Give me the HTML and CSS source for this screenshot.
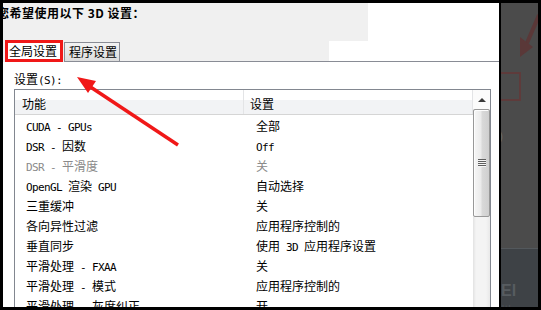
FILE: index.html
```html
<!DOCTYPE html>
<html lang="zh-CN">
<head>
<meta charset="utf-8">
<title>3D 设置</title>
<link rel="stylesheet" href="styles.css">
</head>
<body>
<div class="screen">
  <div class="dialog">
    <div class="title-bar"><h1 class="title">您希望使用以下 3D 设置：</h1></div>
    <div class="tabs">
      <div class="tab tab-active">全局设置</div>
      <div class="tab">程序设置</div>
      <div class="tab-fill"></div>
    </div>
    <div class="panel">
      <div class="label">设置<span class="lat">(S):</span></div>
      <div class="list">
        <div class="list-main">
          <div class="list-head">
            <div class="h1">功能</div>
            <div class="h2">设置</div>
          </div>
          <div class="list-body">
            <div class="row"><div class="c1"><span class="lat">CUDA - GPUs</span></div><div class="c2">全部</div></div>
            <div class="row"><div class="c1"><span class="lat">DSR - </span>因数</div><div class="c2"><span class="lat">Off</span></div></div>
            <div class="row row-off"><div class="c1"><span class="lat">DSR - </span>平滑度</div><div class="c2">关</div></div>
            <div class="row"><div class="c1"><span class="lat">OpenGL </span>渲染<span class="lat"> GPU</span></div><div class="c2">自动选择</div></div>
            <div class="row"><div class="c1">三重缓冲</div><div class="c2">关</div></div>
            <div class="row"><div class="c1">各向异性过滤</div><div class="c2">应用程序控制的</div></div>
            <div class="row"><div class="c1">垂直同步</div><div class="c2">使用<span class="lat"> 3D </span>应用程序设置</div></div>
            <div class="row"><div class="c1">平滑处理<span class="lat"> - FXAA</span></div><div class="c2">关</div></div>
            <div class="row"><div class="c1">平滑处理<span class="lat"> - </span>模式</div><div class="c2">应用程序控制的</div></div>
            <div class="row"><div class="c1">平滑处理<span class="lat"> - </span>灰度纠正</div><div class="c2">开</div></div>
          </div>
        </div>
        <div class="scrollbar">
          <div class="sb-up"><span class="sb-arrow"></span></div>
          <div class="sb-thumb"><span class="sb-grip"></span></div>
          <div class="sb-track"></div>
        </div>
      </div>
    </div>
  </div>
  <div class="side">
    <svg class="side-art" width="37" height="304" viewBox="0 0 37 304">
      <rect x="0" y="245" width="37" height="59" fill="#3e4246"/>
      <rect x="0" y="245" width="37" height="1" fill="#53585c"/>
      <line x1="38" y1="12" x2="26" y2="40" stroke="#5a3838" stroke-width="4"/>
      <polygon points="19,34 19,54 32,44" fill="#5a3838"/>
      <polyline points="0,70 19,70 19,97 0,97" fill="none" stroke="#5e3b3b" stroke-width="2"/>
      <text x="-2" y="137" fill="#6a6a6a" font-size="12" font-family="Liberation Sans, sans-serif">)</text>
      <text x="0" y="293" fill="#575c60" font-size="16" font-weight="bold" font-family="Liberation Sans, sans-serif">El</text>
      <text x="0" y="310" fill="#50555a" font-size="10" font-family="Noto Sans CJK SC, sans-serif">川</text>
    </svg>
  </div>
</div>
<svg class="annot" width="541" height="310" viewBox="0 0 541 310">
  <line x1="89" y1="86" x2="178" y2="145" stroke="#f01818" stroke-width="3.5"/>
  <polygon points="77,77 88,93 96,81" fill="#f01818"/>
</svg>
</body>
</html>
```

FILE: styles.css
```css
* { box-sizing: border-box; }

html, body { margin: 0; padding: 0; }

body {
  position: relative;
  width: 541px;
  height: 310px;
  overflow: hidden;
  background: #000;
  font-family: "Noto Sans CJK SC", "Noto Sans", sans-serif;
  font-size: 12px;
  color: #000;
}

.screen {
  display: flex;
  height: 310px;
  padding: 3px;
}

.dialog {
  flex: none;
  width: 496px;
  height: 304px;
  background: #fff;
  overflow: hidden;
}

.side {
  flex: none;
  width: 37px;
  height: 304px;
  margin-left: 2px;
  background: #4b4b4b;
  overflow: hidden;
}

.side-art { display: block; }

.lat {
  font-family: "DejaVu Sans Mono", "Liberation Mono", monospace;
  font-size: 11px;
  letter-spacing: -0.62px;
  line-height: 1;
}

/* title */
.title-bar {
  width: 365px;
  height: 38px;
  padding-top: 2px;
  background: #f0f0f0;
}

.title {
  margin: 0 0 0 -6px;
  font-size: 12px;
  line-height: 16px;
  font-weight: bold;
  letter-spacing: 0.5px;
  white-space: nowrap;
}

/* tabs */
.tabs {
  display: flex;
  align-items: flex-end;
  height: 21px;
  padding-left: 2px;
  background: linear-gradient(to right, #f0f0f0 326px, #fff 326px);
}

.tab {
  flex: none;
  width: 56px;
  height: 20px;
  margin-left: 1px;
  padding-left: 4px;
  border: 1px solid #898c95;
  background: linear-gradient(#f3f3f3, #dcdcdc);
  line-height: 18px;
  white-space: nowrap;
}

.tab-active {
  width: 58px;
  height: 22px;
  margin-left: 0;
  padding-left: 1px;
  border: 3px solid #f01818;
  background: #fff;
  line-height: 16px;
}

.tab-fill {
  flex: 1;
  height: 1px;
  background: #898c95;
}

/* panel */
.panel {
  padding: 10px 0 0 11px;
}

.label {
  height: 14px;
  line-height: 14px;
  white-space: nowrap;
}

.list {
  display: flex;
  width: 477px;
  height: 240px;
  margin-top: 3px;
  border: 1px solid #828790;
}

.list-main {
  flex: none;
  width: 458px;
}

.list-head {
  display: flex;
  height: 25px;
  border-bottom: 1px solid #d5d5d5;
  background: linear-gradient(#ffffff 0, #ffffff 40%, #f2f3f5 42%, #f2f3f5 100%);
  line-height: 19px;
}

.h1 {
  width: 229px;
  padding: 4px 0 0 7px;
  border-right: 1px solid #e3e4e6;
}

.h2 {
  flex: 1;
  padding: 4px 0 0 6px;
  border-right: 1px solid #e3e4e6;
}

.list-body {
  padding-top: 1px;
}

.row {
  display: flex;
  height: 20px;
  line-height: 19px;
  white-space: nowrap;
}

.row-off { color: #8a8a8a; }

.c1 {
  width: 229px;
  padding-left: 11px;
}

.c2 {
  flex: 1;
  padding-left: 12px;
}

/* scrollbar */
.scrollbar {
  flex: none;
  display: flex;
  flex-direction: column;
  width: 17px;
  background: linear-gradient(to right, #e2e2e2 0, #f4f4f4 3px, #f4f4f4 13px, #e9e9e9 17px);
}

.sb-up {
  display: flex;
  justify-content: center;
  align-items: center;
  height: 19px;
  background: #fbfbfb;
}

.sb-arrow {
  width: 0;
  height: 0;
  margin-top: 1px;
  border-left: 4px solid transparent;
  border-right: 4px solid transparent;
  border-bottom: 4px solid #3a3a3a;
}

.sb-thumb {
  display: flex;
  justify-content: center;
  align-items: center;
  height: 108px;
  border: 1px solid #989898;
  border-radius: 2px;
  background: linear-gradient(to right, #f6f6f6 0, #ebebeb 45%, #d9d9d9 55%, #cfcfcf 100%);
  box-shadow: inset 1px 1px 0 #fdfdfd;
}

.sb-grip {
  width: 8px;
  height: 8px;
  background: repeating-linear-gradient(#5e5e5e 0, #5e5e5e 1px, #f4f4f4 1px, #f4f4f4 2px);
}

.sb-track {
  flex: 1;
}

/* annotation overlay */
.annot {
  position: absolute;
  left: 0;
  top: 0;
  pointer-events: none;
}
```
